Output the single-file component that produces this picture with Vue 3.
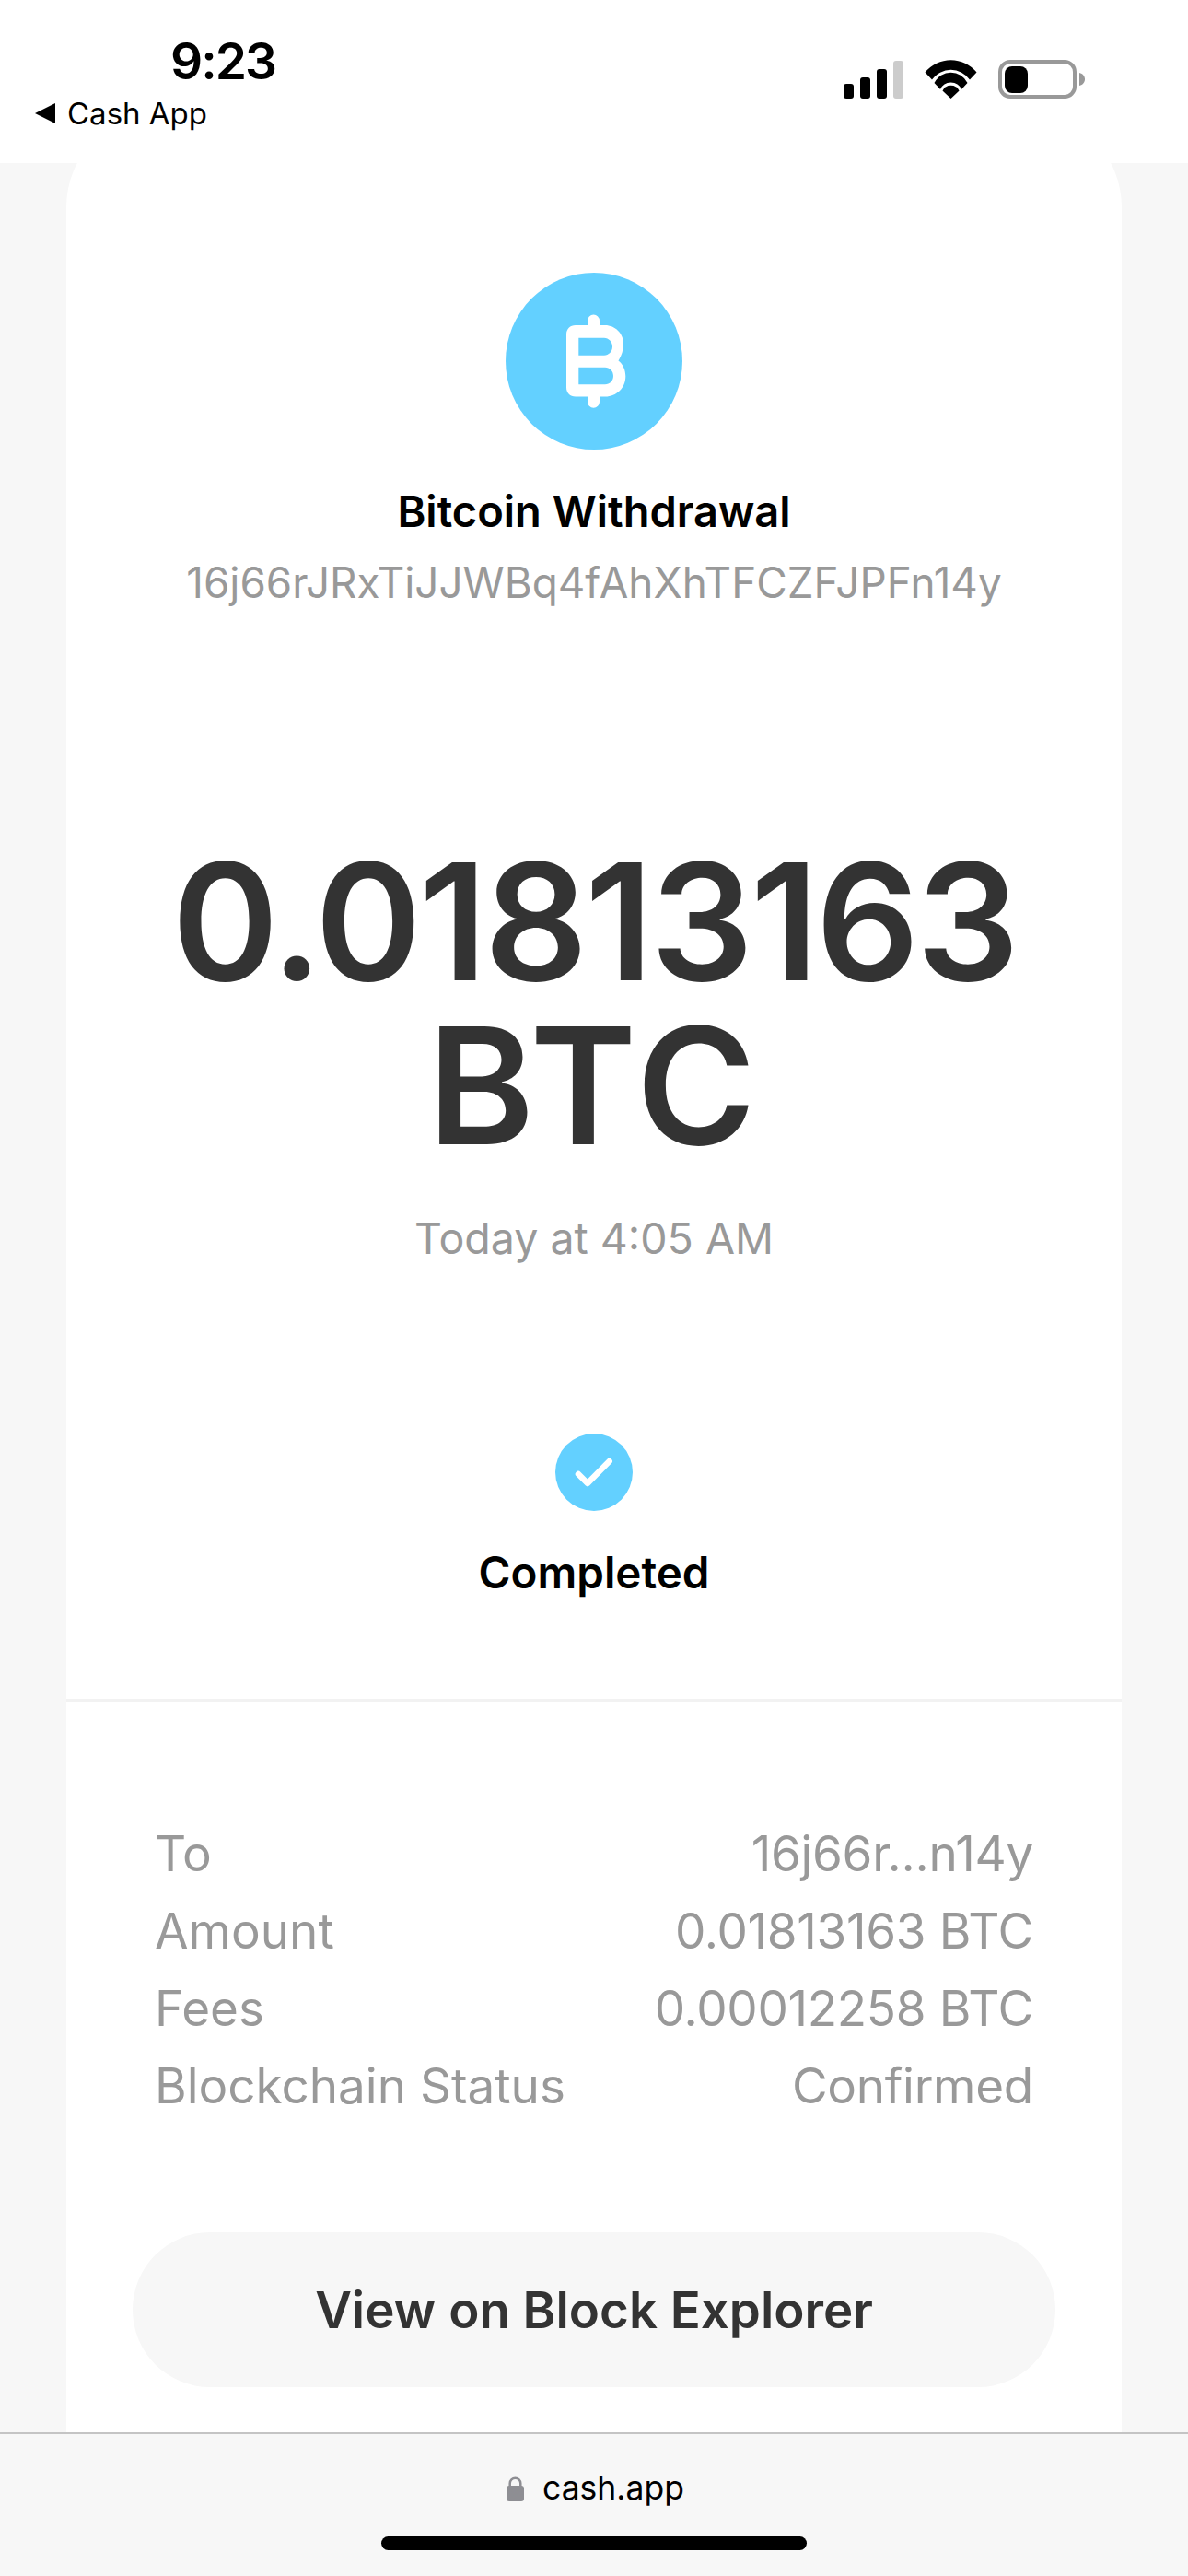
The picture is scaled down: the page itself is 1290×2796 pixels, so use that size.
<template>
  <div class="page">
    <header class="status">
      <div class="status-left">
        <div class="time">9:23</div>
        <div class="back"><span class="back-arrow"></span>Cash App</div>
      </div>
      <div class="status-icons">
        <svg width="65" height="41" viewBox="0 0 65 41">
          <rect x="0" y="25" width="11" height="16" rx="3" fill="#000" />
          <rect x="18" y="18" width="11" height="23" rx="3" fill="#000" />
          <rect x="36" y="9" width="11" height="32" rx="3" fill="#000" />
          <rect x="54" y="0" width="11" height="41" rx="3" fill="#ccc" />
        </svg>
        <svg width="57" height="42" viewBox="0 0 57 42">
          <path d="M.5 13.500A36 36 0 0 1 56.500 13.500L49 21.500A25 25 0 0 0 8 21.500Z" fill="#000" />
          <path d="M10.500 25A20 20 0 0 1 46.500 25L40 32A12.500 12.500 0 0 0 17 32Z" fill="#000" />
          <path d="M28.500 42L19.500 33.500A10 10 0 0 1 37.500 33.500Z" fill="#000" />
        </svg>
        <svg width="94" height="42" viewBox="0 0 94 42">
          <rect x="2" y="2" width="81" height="38" rx="11" fill="none" stroke="#999" stroke-width="4" />
          <rect x="7" y="7" width="25" height="29" rx="8" fill="#000" />
          <path d="M88 14c4 1 6 4 6 7s-2 6-6 7z" fill="#999" />
        </svg>
      </div>
    </header>

    <main class="main">
      <section class="card">
        <div class="summary">
          <div class="coin">
            <svg width="192" height="192" viewBox="0 0 192 192">
              <path
                fill="#fff"
                fill-rule="evenodd"
                d="M89 52a6.500 6.500 0 0 1 13 0v5h6c11 0 20 9 20 20 0 7-2 13-5.500 18.500 5 4 7.800 10 7.800 17 0 12.500-10 22-22 22H102v5.700a6.500 6.500 0 0 1-13 0v-5.700H76c-6 0-10-4-10-10V67c0-6 4-10 10-10h13zM79.300 70.700V89.700H107c5 0 9-4.300 9-9.500s-4-9.500-9-9.500zM79.300 102.700V121.300H108c5 0 9-4 9-9.300s-4-9.300-9-9.300z"
              />
            </svg>
          </div>
          <h1 class="title">Bitcoin Withdrawal</h1>
          <p class="address">16j66rJRxTiJJWBq4fAhXhTFCZFJPFn14y</p>
          <div class="amount">0.01813163</div>
          <div class="unit">BTC</div>
          <p class="date">Today at 4:05 AM</p>
          <div class="check">
            <svg width="84" height="84" viewBox="0 0 84 84">
              <path d="M25 44L35 54L58.700 30" fill="none" stroke="#fff" stroke-width="6.500" stroke-linecap="round" stroke-linejoin="round" />
            </svg>
          </div>
          <div class="state">Completed</div>
        </div>

        <div class="details">
          <div v-for="row in rows" :key="row.label" class="row">
            <span>{{ row.label }}</span>
            <span class="value">{{ row.value }}</span>
          </div>
        </div>

        <div class="action">
          <button class="explorer" type="button">View on Block Explorer</button>
        </div>
      </section>
    </main>

    <footer class="footer">
      <div class="url">
        <svg width="19" height="27" viewBox="0 0 19 27">
          <path d="M3.700 11V7.500a5.800 5.800 0 0 1 11.600 0V11" fill="none" stroke="#8e8e93" stroke-width="2.500" />
          <rect x="0" y="10" width="19" height="17" rx="3" fill="#8e8e93" />
        </svg>
        <span>cash.app</span>
      </div>
      <div class="home-bar"></div>
    </footer>
  </div>
</template>

<script setup>
const rows = [
  { label: 'To', value: '16j66r...n14y' },
  { label: 'Amount', value: '0.01813163 BTC' },
  { label: 'Fees', value: '0.00012258 BTC' },
  { label: 'Blockchain Status', value: 'Confirmed' },
]
</script>

<style>
html,
body {
  margin: 0;
  background: #f7f7f7;
}
</style>

<style scoped>
.page {
  display: flex;
  flex-direction: column;
  height: 2796px;
  overflow: hidden;
  background: #f7f7f7;
  font-family: Inter, 'Liberation Sans', sans-serif;
}

.status {
  flex: none;
  height: 177px;
  box-sizing: border-box;
  display: flex;
  justify-content: space-between;
  background: #fff;
  color: #000;
  padding: 0 112px 0 38px;
  position: relative;
  z-index: 1;
}

.time {
  margin: 39px 0 0 147px;
  font-size: 55px;
  line-height: 54px;
  font-weight: 600;
  letter-spacing: -2px;
}

.back {
  display: flex;
  align-items: center;
  gap: 13px;
  margin-top: 10px;
  font-size: 33px;
  line-height: 40px;
}

.back-arrow {
  width: 0;
  height: 0;
  border-top: 11px solid transparent;
  border-bottom: 11px solid transparent;
  border-right: 22px solid #000;
}

.status-icons {
  display: flex;
  align-items: flex-end;
  gap: 23px;
  height: 107px;
}

.status-icons svg {
  display: block;
}

.main {
  flex: 1;
  min-height: 0;
  overflow: hidden;
  padding: 0 72px;
}

.card {
  margin-top: -55px;
  height: 2700px;
  background: #fff;
  border-radius: 103px 103px 0 0;
}

.summary {
  display: flex;
  flex-direction: column;
  align-items: center;
  height: 1725px;
  box-sizing: border-box;
  padding-top: 174px;
  border-bottom: 3px solid #f2f2f2;
}

.coin {
  width: 192px;
  height: 192px;
  border-radius: 50%;
  background: #63d0ff;
}

.coin svg,
.check svg {
  display: block;
}

.title {
  margin: 39px 0 0;
  font-size: 47px;
  line-height: 56px;
  font-weight: 600;
  color: #000;
}

.address {
  margin: 22px 0 0;
  font-size: 45.800px;
  line-height: 56px;
  color: #999;
}

.amount,
.unit {
  font-size: 176px;
  line-height: 178px;
  font-weight: 600;
  color: #333;
}

.amount {
  margin-top: 250px;
  letter-spacing: -3.400px;
}

.unit {
  letter-spacing: 5px;
}

.date {
  margin: 49px 0 0;
  font-size: 46.500px;
  line-height: 56px;
  color: #999;
}

.check {
  width: 84px;
  height: 84px;
  margin-top: 184px;
  border-radius: 50%;
  background: #63d0ff;
}

.state {
  margin-top: 39px;
  font-size: 47.500px;
  line-height: 56px;
  font-weight: 600;
  color: #000;
}

.details {
  padding: 123px 96px 0 96px;
}

.row {
  display: flex;
  justify-content: space-between;
  font-size: 53px;
  line-height: 84px;
  color: #999;
}

.value {
  letter-spacing: -0.3px;
}

.action {
  padding: 117px 72px 0;
}

.explorer {
  display: block;
  width: 100%;
  height: 168px;
  border: 0;
  border-radius: 84px;
  background: #f7f7f7;
  color: #333;
  font-family: inherit;
  font-size: 54.600px;
  font-weight: 600;
}

.footer {
  flex: none;
  height: 156px;
  box-sizing: border-box;
  border-top: 2px solid #c4c4c4;
  background: #f7f7f7;
  display: flex;
  flex-direction: column;
  align-items: center;
  position: relative;
  z-index: 1;
}

.url {
  display: flex;
  align-items: center;
  gap: 20px;
  margin-top: 37px;
  padding-left: 3px;
  font-size: 35.500px;
  line-height: 44px;
  color: #000;
}

.url svg {
  display: block;
}

.home-bar {
  width: 462px;
  height: 15px;
  margin-top: 30px;
  border-radius: 8px;
  background: #000;
}
</style>
